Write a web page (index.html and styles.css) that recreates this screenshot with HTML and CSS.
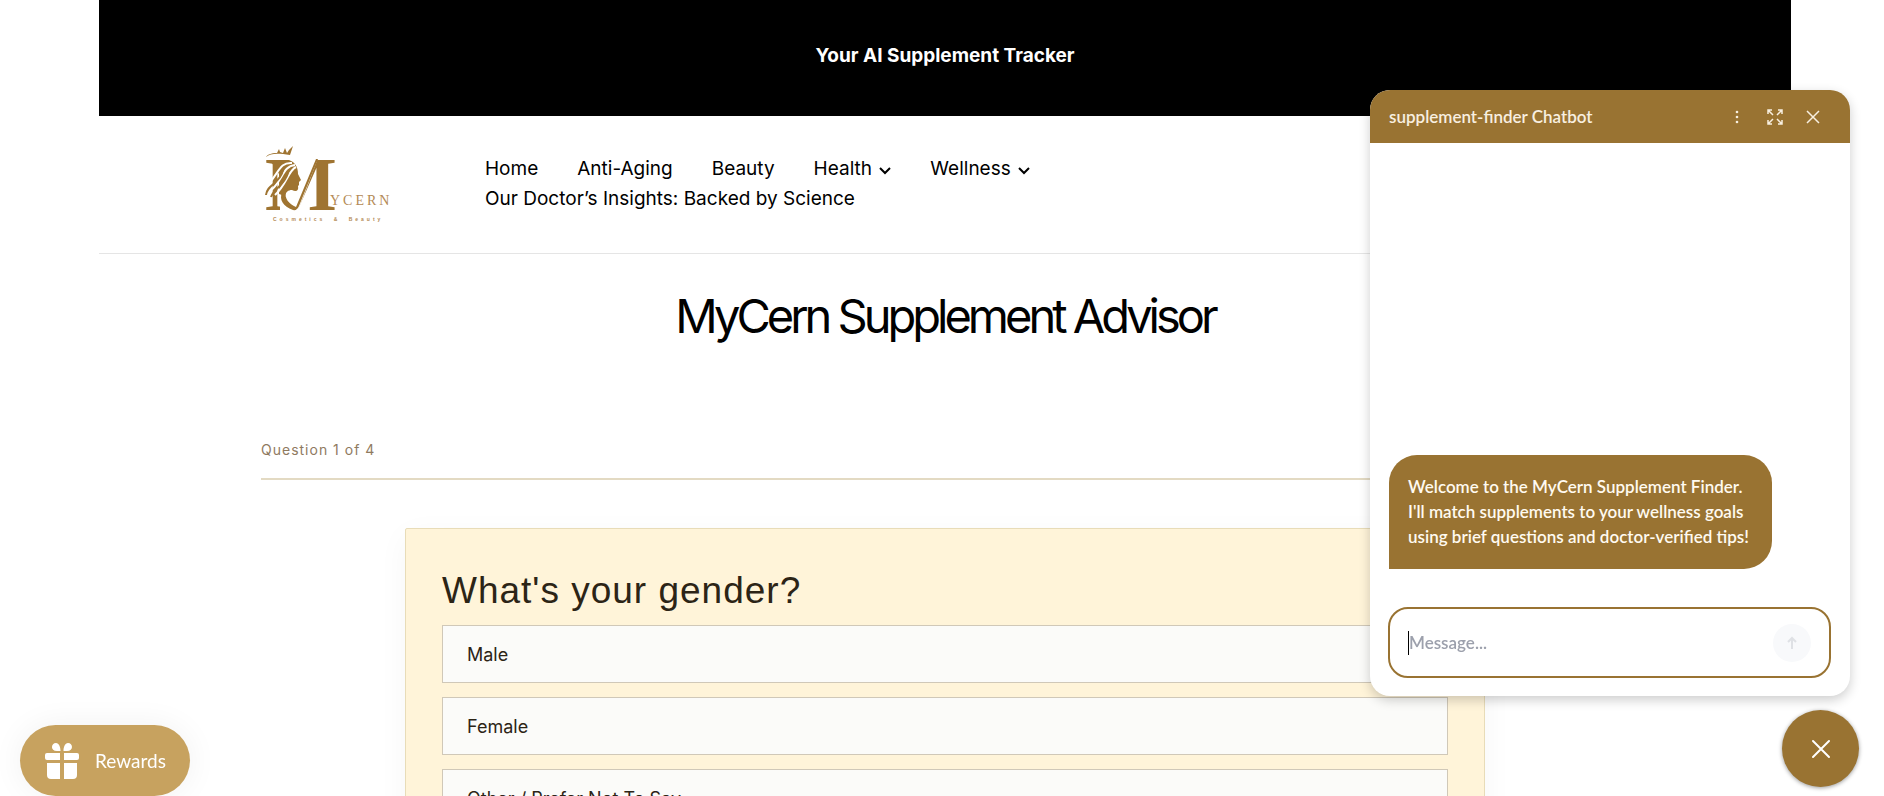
FILE: index.html
```
<!DOCTYPE html>
<html lang="en">

<head>
    <meta charset="UTF-8">
    <meta name="viewport" content="width=device-width, initial-scale=1.0">
    <title>MyCern Supplement Advisor</title>
    <link rel="stylesheet" href="styles.css">
</head>

<body>
    <div class="page">
        <div class="announcement">Your AI Supplement Tracker</div>

        <header class="site-header">
            <a href="#" class="logo" aria-label="MyCern Cosmetics and Beauty">
                <svg width="128" height="80" viewBox="0 0 128 80" fill="#9f7431">
                    <!-- monogram -->
                    <text x="4" y="66" class="logo-m">M</text>
                    <path fill="#fff" d="M19 14 H57 L37 67 H19 Z" />
                    <path d="M57 15 L38 62 Q36 67 32 66 C22 62 18 56 21 48 L25 48 C23 54 28 60 35 63 L55 15 Z" />
                    <!-- profile with hair -->
                    <path d="M9 16 L28 16 C34 18 37 23 37 30 L40 36 L38 38 L38 41 L37 42 C38 47 35 48 31 46 C27 46 25 48 24 52 L18 50 L18 30 Z" />
                    <path fill="none" stroke="#fff" stroke-width="2" d="M31 19 C18 18 18 30 4 44 M34 21 C21 22 22 38 8 48 M35 23 C27 27 26 40 14 51" />
                    <path fill="none" stroke="#9f7431" stroke-width="2" d="M5 51 C6 40 19 40 22 26 M10 53 C13 44 23 42 27 29" />
                    <!-- crown -->
                    <path d="M5 13 C10 9 17 9 29 11 L32 2 L28 6 L26 9 L24 4 L22 9 L19 8 L18 5 L16 9 C10 9 6 11 5 13 Z" />
                    <text x="69" y="61" class="logo-name">YCERN</text>
                    <text x="12" y="77" class="logo-sub">Cosmetics &amp; Beauty</text>
                </svg>
            </a>
            <nav class="main-nav">
                <a href="#">Home</a>
                <a href="#">Anti-Aging</a>
                <a href="#">Beauty</a>
                <a href="#">Health <svg class="chevron" viewBox="0 0 12 8"><path d="M1 1 L6 6 L11 1" /></svg></a>
                <a href="#">Wellness <svg class="chevron" viewBox="0 0 12 8"><path d="M1 1 L6 6 L11 1" /></svg></a>
                <a href="#">Our Doctor’s Insights: Backed by Science</a>
            </nav>
        </header>

        <main>
            <h1>MyCern Supplement Advisor</h1>

            <section class="quiz">
                <div class="quiz-progress">Question 1 of 4</div>
                <div class="quiz-card">
                    <h2>What's your gender?</h2>
                    <div class="options">
                        <button class="option">Male</button>
                        <button class="option">Female</button>
                        <button class="option">Other / Prefer Not To Say</button>
                    </div>
                </div>
            </section>
        </main>
    </div>

    <button class="rewards">
        <svg width="34" height="36" viewBox="0 0 34 36" fill="#fff">
            <path d="M15.500 8 H12 C5 8 6 0 11 0 C14 0 15.500 4 15.500 8 Z M18.500 8 H22 C29 8 28 0 23 0 C20 0 18.500 4 18.500 8 Z" />
            <path d="M15 10 V17 H2 Q0 17 0 15 V12 Q0 10 2 10 Z M19 10 H32 Q34 10 34 12 V15 Q34 17 32 17 H19 Z" />
            <path d="M15 20 V36 H6 Q2 36 2 32 V20 Z M19 20 H32 V32 Q32 36 28 36 H19 Z" />
        </svg>
        Rewards
    </button>

    <!-- Chat widget -->
    <div class="chat">
        <div class="chat-header">
            <span class="chat-title">supplement-finder Chatbot</span>
            <button class="chat-action" aria-label="Menu">
                <svg width="16" height="16" viewBox="0 0 16 16" fill="#f8efe0"><circle cx="8" cy="3" r="1.300" /><circle cx="8" cy="8" r="1.300" /><circle cx="8" cy="13" r="1.300" /></svg>
            </button>
            <button class="chat-action" aria-label="Expand">
                <svg width="16" height="16" viewBox="0 0 16 16" class="line-icon"><path d="M1 5 V1 H5 M1 1 L6 6 M11 1 H15 V5 M15 1 L10 6 M1 11 V15 H5 M1 15 L6 10 M15 11 V15 H11 M15 15 L10 10" /></svg>
            </button>
            <button class="chat-action" aria-label="Close">
                <svg width="16" height="16" viewBox="0 0 16 16" class="line-icon"><path d="M2 2 L14 14 M14 2 L2 14" /></svg>
            </button>
        </div>
        <div class="chat-body">
            <div class="bubble">Welcome to the MyCern Supplement Finder. I'll match supplements to your wellness goals using brief questions and doctor-verified tips!</div>
        </div>
        <form class="chat-form">
            <input type="text" placeholder="Message..." aria-label="Message">
            <button type="button" class="send" aria-label="Send">
                <svg width="12" height="14" viewBox="0 0 12 14"><path d="M6 13 V2 M2 6 L6 2 L10 6" /></svg>
            </button>
        </form>
    </div>

    <button class="chat-toggle" aria-label="Close chat">
        <svg width="20" height="20" viewBox="0 0 20 20"><path d="M2 2 L18 18 M18 2 L2 18" /></svg>
    </button>
</body>

</html>
```
FILE: styles.css
```
body {
    margin: 0;
    background: #fff;
    color: #000;
    font-family: Inter, "Liberation Sans", sans-serif;
}

button,
input {
    font-family: inherit;
}

button {
    border: none;
    padding: 0;
    cursor: pointer;
}

.page {
    margin: 0 93px 0 99px;
}

.announcement {
    background: #000;
    color: #fff;
    text-align: center;
    font-size: 19px;
    font-weight: 700;
    line-height: 30px;
    padding: 41px 20px 45px;
}

.site-header {
    display: flex;
    align-items: flex-start;
    gap: 96px;
    padding: 28px 162px 29px;
    border-bottom: 1px solid #e5e5e5;
}

.logo {
    display: block;
    height: 80px;
}

.logo svg {
    overflow: visible;
}

.logo-m {
    font: bold 76px "Liberation Serif", serif;
}

.logo-name {
    font: 14px "Liberation Serif", serif;
    letter-spacing: 3px;
    fill: #b48a55;
}

.logo-sub {
    font: bold 5px "Liberation Sans", sans-serif;
    letter-spacing: 3px;
    word-spacing: 4px;
    fill: #b48a55;
}

.main-nav {
    display: flex;
    flex-wrap: wrap;
    column-gap: 39px;
    width: 580px;
    padding-top: 10px;
}

.main-nav a {
    color: #000;
    font-size: 19px;
    line-height: 30px;
    text-decoration: none;
}

.chevron {
    width: 12px;
    height: 8px;
    margin-left: 2px;
    fill: none;
    stroke: #000;
    stroke-width: 2;
}

h1 {
    margin: 32px 0 0;
    text-align: center;
    font-size: 47px;
    font-weight: 400;
    line-height: 60px;
    letter-spacing: -4px;
}

.quiz {
    padding: 92px 162px 0;
}

.quiz-progress {
    color: #8f7a5f;
    font-size: 14px;
    line-height: 24px;
    letter-spacing: 1px;
    padding-bottom: 16px;
    border-bottom: 2px solid #e3dac3;
}

.quiz-card {
    box-sizing: border-box;
    max-width: 1080px;
    margin: 48px auto 0;
    padding: 36px;
    background: #fff4d9;
    border: 1px solid #e8dcb8;
    border-radius: 2px;
    box-shadow: 0 8px 32px rgba(0, 0, 0, 0.04);
}

.quiz-card h2 {
    margin: 0 0 8px;
    color: #2c2416;
    font: 37px/52px "Liberation Sans", sans-serif;
    letter-spacing: 1px;
}

.options {
    display: flex;
    flex-direction: column;
    gap: 14px;
}

.option {
    height: 58px;
    padding: 0 24px;
    background: #fbfbf9;
    border: 1px solid #d0c8b8;
    color: #2c2416;
    font-size: 18px;
    text-align: left;
}

.rewards {
    position: fixed;
    left: 20px;
    bottom: 0;
    display: flex;
    align-items: center;
    gap: 16px;
    height: 71px;
    padding: 0 24px 0 25px;
    background: #c7a25f;
    border-radius: 36px;
    box-shadow: 0 0 32px rgba(0, 0, 0, 0.06);
    color: #fff;
    font: 19px Lato, sans-serif;
}

.chat {
    position: fixed;
    right: 34px;
    bottom: 100px;
    display: flex;
    flex-direction: column;
    width: 480px;
    height: 606px;
    background: #fff;
    border-radius: 20px;
    box-shadow: 0 4px 12px rgba(0, 0, 0, 0.2);
    overflow: hidden;
    font-family: Lato, sans-serif;
    font-weight: 600;
}

.chat-header {
    display: flex;
    align-items: center;
    gap: 22px;
    height: 53px;
    padding: 0 29px 0 19px;
    background: #997332;
}

.chat-title {
    flex: 1;
    color: #f8efe0;
    font-size: 17px;
}

.chat-action {
    display: flex;
    background: none;
}

.line-icon {
    fill: none;
    stroke: #f8efe0;
    stroke-width: 1.5;
}

.chat-body {
    flex: 1;
    display: flex;
    align-items: flex-end;
    padding: 0 19px;
}

.bubble {
    width: 344px;
    padding: 19px 20px 20px 19px;
    background: #997332;
    border-radius: 28px 28px 28px 0;
    color: #fffaf0;
    font-size: 17px;
    line-height: 25px;
}

.chat-form {
    display: flex;
    align-items: center;
    box-sizing: border-box;
    height: 71px;
    margin: 38px 19px 18px 18px;
    padding: 0 18px;
    border: 2px solid #997332;
    border-radius: 20px;
}

.chat-form input {
    flex: 1;
    min-width: 0;
    height: 24px;
    padding: 0;
    border: none;
    border-left: 1px solid #000;
    outline: none;
    background: none;
    font-size: 17px;
    font-weight: 600;
}

.chat-form input::placeholder {
    color: #9ca0ac;
}

.send {
    display: flex;
    align-items: center;
    justify-content: center;
    width: 38px;
    height: 38px;
    background: #f8f9fb;
    border-radius: 50%;
}

.send svg {
    fill: none;
    stroke: #dfe1e5;
    stroke-width: 2;
}

.chat-toggle {
    position: fixed;
    right: 25px;
    bottom: 9px;
    display: flex;
    align-items: center;
    justify-content: center;
    width: 77px;
    height: 77px;
    background: #997332;
    border-radius: 50%;
    box-shadow: 0 1px 4px rgba(0, 0, 0, 0.4);
}

.chat-toggle svg {
    fill: none;
    stroke: #fff;
    stroke-width: 2;
    stroke-linecap: round;
}
```
